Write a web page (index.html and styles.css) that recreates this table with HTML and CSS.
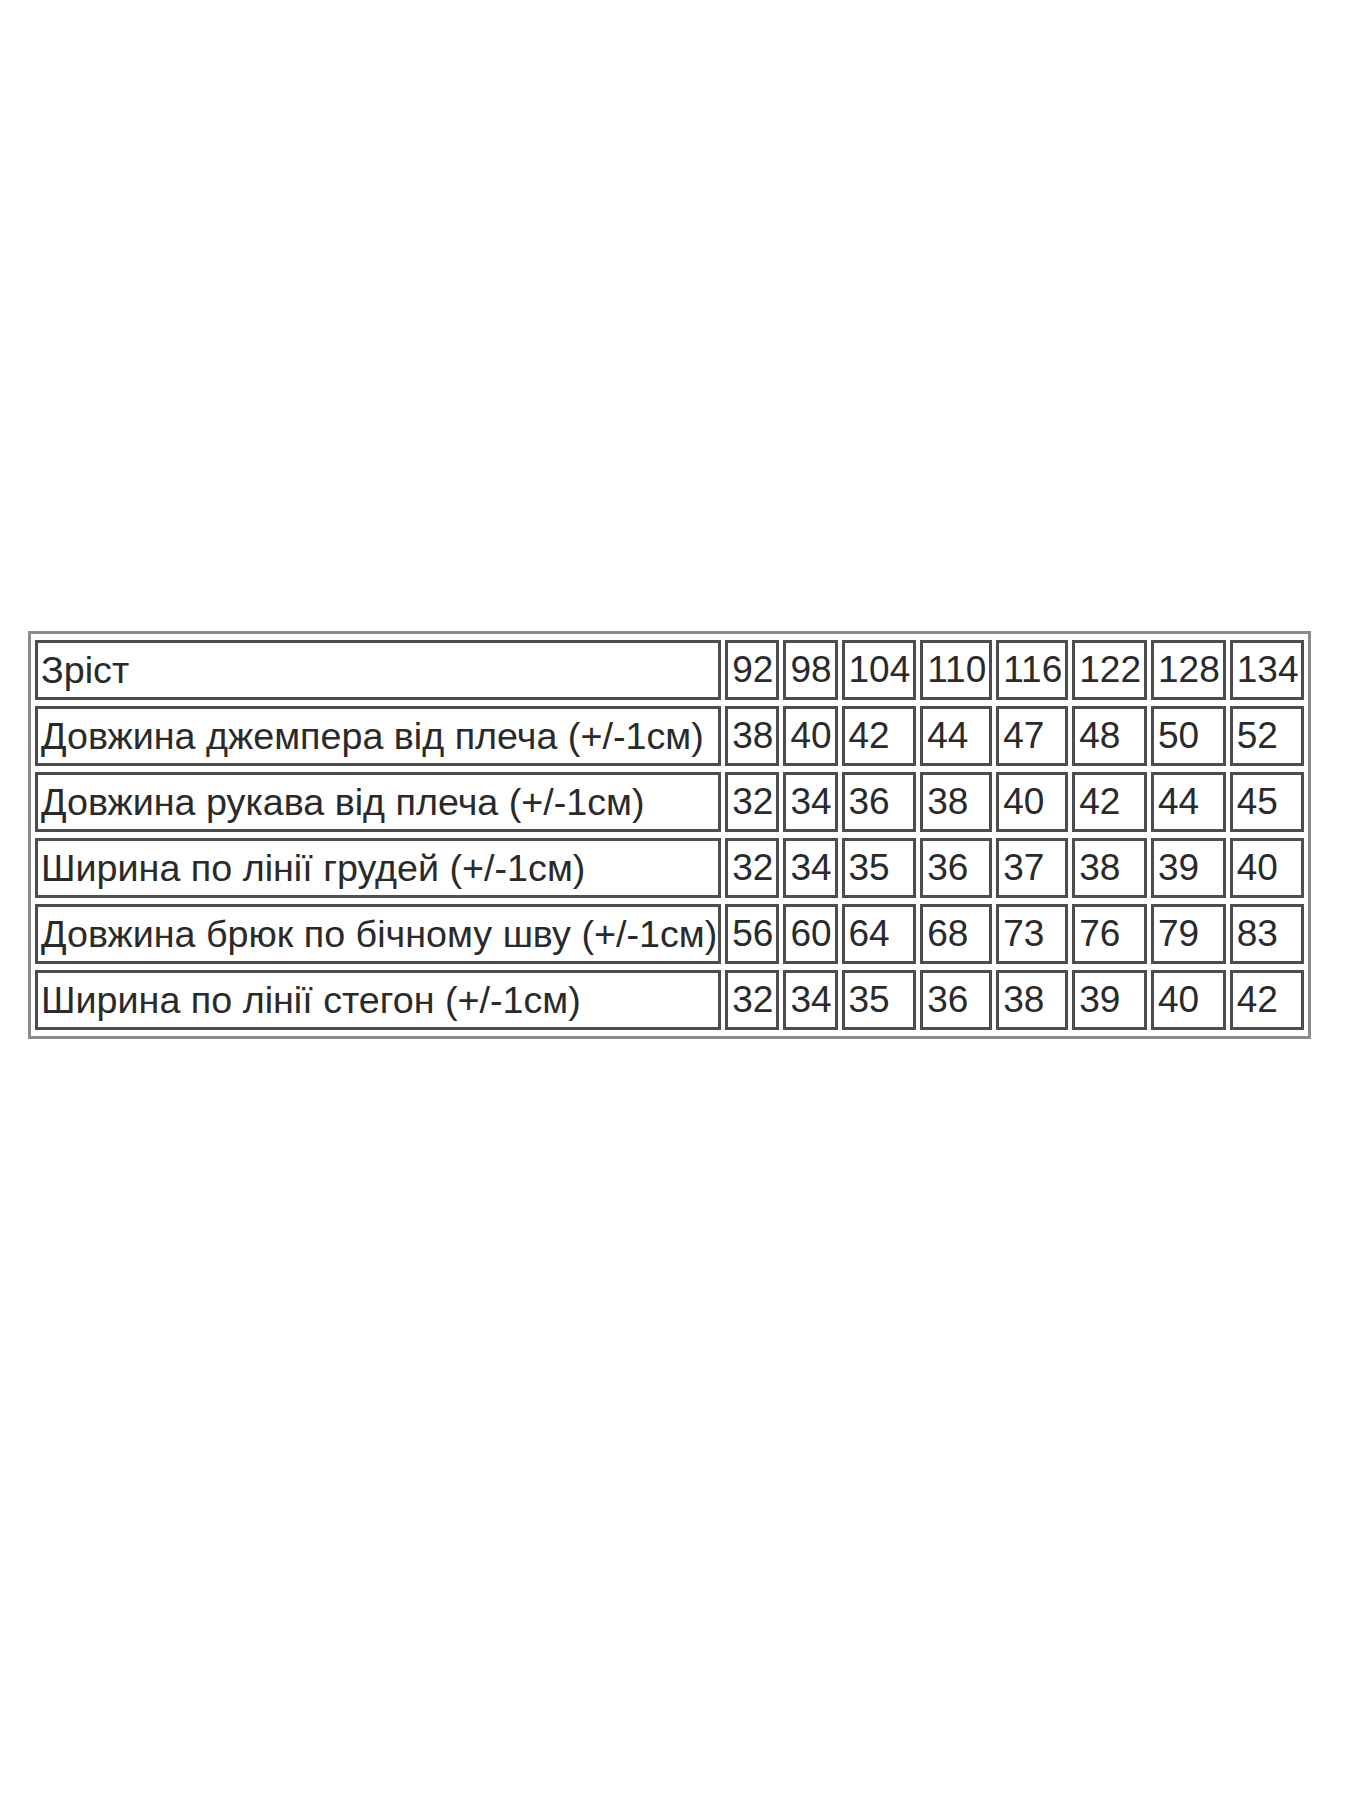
FILE: index.html
```html
<!DOCTYPE html>
<html lang="uk">
<head>
<meta charset="utf-8">
<title>Таблиця розмірів</title>
<link rel="stylesheet" href="styles.css">
</head>
<body>
<main class="page">
  <table class="sizes">
    <tr><td class="label">Зріст</td><td>92</td><td>98</td><td>104</td><td>110</td><td>116</td><td>122</td><td>128</td><td>134</td></tr>
    <tr><td class="label">Довжина джемпера від плеча (+/-1см)</td><td>38</td><td>40</td><td>42</td><td>44</td><td>47</td><td>48</td><td>50</td><td>52</td></tr>
    <tr><td class="label">Довжина рукава від плеча (+/-1см)</td><td>32</td><td>34</td><td>36</td><td>38</td><td>40</td><td>42</td><td>44</td><td>45</td></tr>
    <tr><td class="label">Ширина по лінії грудей (+/-1см)</td><td>32</td><td>34</td><td>35</td><td>36</td><td>37</td><td>38</td><td>39</td><td>40</td></tr>
    <tr><td class="label">Довжина брюк по бічному шву (+/-1см)</td><td>56</td><td>60</td><td>64</td><td>68</td><td>73</td><td>76</td><td>79</td><td>83</td></tr>
    <tr><td class="label">Ширина по лінії стегон (+/-1см)</td><td>32</td><td>34</td><td>35</td><td>36</td><td>38</td><td>39</td><td>40</td><td>42</td></tr>
  </table>
</main>
</body>
</html>
```

FILE: styles.css
```css
html, body {
  margin: 0;
  padding: 0;
  background: #ffffff;
}

.page {
  padding: 631px 0 0 28px;
  min-height: 1169px;
}

.sizes {
  border: 3px solid #8c8c8c;
  border-collapse: separate;
  border-spacing: 4px 6px;
  font-family: "Liberation Sans", Arial, sans-serif;
  font-size: 37px;
  color: #2a2a2a;
}

.sizes td {
  border: 3px solid #4d4d4d;
  padding: 0 3px 0 4px;
  box-sizing: border-box;
  height: 60px;
  vertical-align: middle;
  text-align: left;
  white-space: nowrap;
}

.sizes td.label {
  font-size: 37.7px;
  padding: 0 1px 0 3px;
}
```
